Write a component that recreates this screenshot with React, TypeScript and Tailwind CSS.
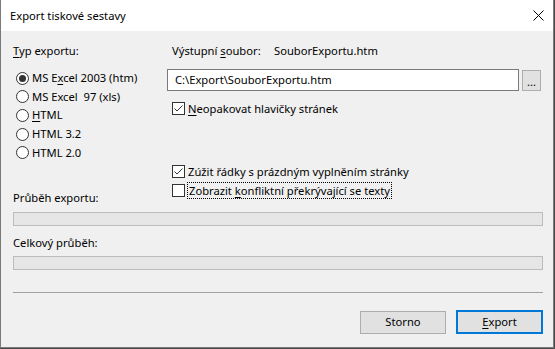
import React from "react";

function Radio({ checked, children }: { checked?: boolean; children: React.ReactNode }) {
  return (
    <div className="flex h-[18.6px] items-center pl-[3px]">
      <span className="flex h-[13px] w-[13px] items-center justify-center rounded-full border border-[#333333] bg-white">
        {checked && <span className="h-[7px] w-[7px] rounded-full bg-[#333333]" />}
      </span>
      <span className="ml-[3px] leading-[16px]">{children}</span>
    </div>
  );
}

function Check({
  checked,
  focused,
  children,
}: {
  checked?: boolean;
  focused?: boolean;
  children: React.ReactNode;
}) {
  return (
    <div className="flex h-[19px] items-center pl-[5px]">
      <span className="flex h-[13px] w-[13px] items-center justify-center border border-[#333333] bg-white">
        {checked && (
          <svg width="11" height="11" viewBox="0 0 11 11">
            <path d="M1.5 5.5 L4 8 L9.5 2.5" fill="none" stroke="#333333" strokeWidth="1" />
          </svg>
        )}
      </span>
      <span
        className={
          focused
            ? "ml-[2px] border border-dotted border-black px-[1px] leading-[15px]"
            : "ml-[3px] leading-[16px]"
        }
      >
        {children}
      </span>
    </div>
  );
}

export default function App() {
  return (
    <div className="h-[349px] w-[555px] overflow-hidden bg-[#4a4a4a] font-['Noto_Sans',sans-serif] text-[11.2px] text-black">
      <div className="flex h-[348px] w-[554px] flex-col border-x border-b border-[#7a7a7a] bg-[#f0f0f0]">
        {/* title bar */}
        <div className="flex h-[31px] shrink-0 items-center justify-between bg-white pl-[9px] pr-[9px]">
          <span className="leading-[16px]">Export tiskové sestavy</span>
          <svg width="11" height="11" viewBox="0 0 11 11">
            <path d="M0.5 0.5 L10.5 10.5 M10.5 0.5 L0.5 10.5" stroke="#000" strokeWidth="1" />
          </svg>
        </div>

        <div className="flex flex-col pl-[12px] pr-[10px]">
          <div className="flex pt-[12px]">
            {/* left column */}
            <div className="flex w-[154px] flex-col">
              <div className="h-[16px] leading-[16px]">
                <span className="underline underline-offset-2">T</span>yp exportu:
              </div>
              <div className="mt-[10px] flex flex-col">
                <Radio checked>
                  MS E<span className="underline underline-offset-2">x</span>cel 2003 (htm)
                </Radio>
                <Radio>MS Excel&nbsp; 97 (xls)</Radio>
                <Radio>
                  <span className="underline underline-offset-2">H</span>TML
                </Radio>
                <Radio>HTML 3.2</Radio>
                <Radio>HTML 2.0</Radio>
              </div>
              <div className="mt-[28px] h-[16px] leading-[16px]">Průběh exportu:</div>
            </div>

            {/* right column */}
            <div className="flex flex-1 flex-col">
              <div className="flex h-[16px] pl-[5px] leading-[16px]">
                <span className="w-[102px]">
                  Výstupní <span className="underline underline-offset-2">s</span>oubor:
                </span>
                <span>SouborExportu.htm</span>
              </div>
              <div className="mt-[10px] flex items-start">
                <div className="flex h-[22px] w-[352px] items-center border border-[#7a7a7a] bg-white pl-[7px] leading-[16px]">
                  C:\Export\SouborExportu.htm
                </div>
                <button className="ml-[3px] mt-[1px] flex h-[21px] w-[19px] items-end justify-center border border-[#adadad] bg-[#e1e1e1] pb-[3px] text-[11px] leading-[11px]">
                  ...
                </button>
              </div>
              <div className="mt-[8px]">
                <Check checked>
                  <span className="underline underline-offset-2">N</span>eopakovat hlavičky stránek
                </Check>
              </div>
              <div className="mt-[44px] flex flex-col">
                <Check checked>Zúžit řádky s prázdným vyplněním stránky</Check>
                <Check focused>
                  Zobrazit <span className="underline underline-offset-2">k</span>onfliktní překrývající se texty
                </Check>
              </div>
            </div>
          </div>

          <div className="mt-[6px] h-[14px] border border-[#bcbcbc] bg-[#e6e6e6]" />
          <div className="mt-[9px] h-[16px] leading-[16px]">Celkový průběh:</div>
          <div className="mt-[5px] h-[14px] border border-[#bcbcbc] bg-[#e6e6e6]" />

          <div className="mt-[22px] h-px bg-[#a0a0a0]" />

          <div className="mt-[17px] flex justify-end gap-[10px]">
            <button className="mt-[1px] h-[23px] w-[86px] border border-[#adadad] bg-[#e1e1e1] leading-[16px]">
              Storno
            </button>
            <button className="h-[24px] w-[87px] border-2 border-[#0078d7] bg-[#e1e1e1] leading-[16px]">
              <span className="underline underline-offset-2">E</span>xport
            </button>
          </div>
        </div>
      </div>
    </div>
  );
}
